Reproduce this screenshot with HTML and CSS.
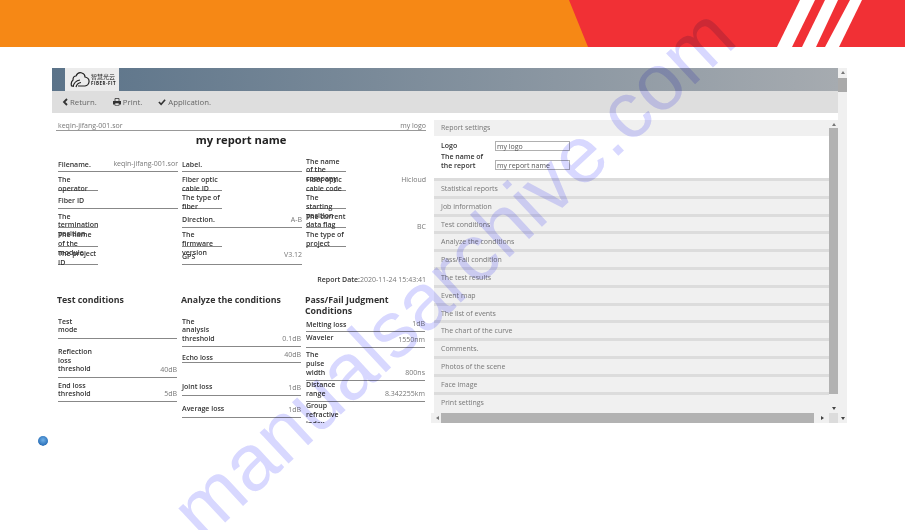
FILE: index.html
```html
<!DOCTYPE html>
<html lang="en">
<head>
    <meta charset="UTF-8">
    <meta name="viewport" content="width=device-width, initial-scale=1.0">
    <title>Report settings</title>
    <link rel="stylesheet" href="styles.css">
</head>
<body>

    <div class="banner">
        <svg width="905" height="47" viewBox="0 0 905 47">
            <rect width="905" height="47" fill="#f68815"/>
            <polygon points="569,0 905,0 905,47 588,47" fill="#f13035"/>
            <polygon points="800,0 815,0 792,47 777,47" fill="#fff"/>
            <polygon points="825,0 838,0 816,47 802,47" fill="#fff"/>
            <polygon points="850,0 862,0 839,47 825,47" fill="#fff"/>
        </svg>
    </div>

    <div class="app">
        <div class="app-main">
            <div class="titlebar">
                <div class="logo">
                    <svg width="20" height="17" viewBox="0 0 20 17">
                        <path d="M4 15 H1.500 Q0.500 11 3 9 Q3 5 6 5 Q8 0.500 12 2 Q15 3 15 6 Q19.500 7 19 11 Q18.500 14.500 15 15 H8" fill="none" stroke="#222" stroke-width="1.200"/>
                        <path d="M3 16 Q4 10 10 9 M6 16 Q7 12 11 11.500" fill="none" stroke="#222" stroke-width="1.200"/>
                    </svg>
                    <div class="logo-text">
                        <span class="logo-cn">智慧光云</span>
                        <span class="logo-en">FIBER-FIT</span>
                    </div>
                </div>
            </div>
            <div class="toolbar">
                <span class="tool">
                    <svg width="6" height="8" viewBox="0 0 6 8"><path d="M5 1 L2 4 L5 7" fill="none" stroke="#333" stroke-width="1.800"/></svg>
                    Return.
                </span>
                <span class="tool">
                    <svg width="8" height="8" viewBox="0 0 8 8"><path d="M2 3 V0.500 H6 V3" fill="none" stroke="#333" stroke-width="0.800"/><rect x="0" y="3" width="8" height="3.500" fill="#333"/><rect x="2" y="5" width="4" height="2.500" fill="#dedede" stroke="#333" stroke-width="0.600"/></svg>
                    Print.
                </span>
                <span class="tool">
                    <svg width="8" height="8" viewBox="0 0 9 8"><path d="M1 4 L3.500 6.500 L8 1.500" fill="none" stroke="#333" stroke-width="1.800"/></svg>
                    Application.
                </span>
            </div>
            <div class="content">
                <div class="report">
                    <div class="report-head"><span>keqin-jifang-001.sor</span><span>my logo</span></div>
                    <h1 class="report-title">my report name</h1>

                    <div class="info-grid">
                        <div class="col">
                            <div class="row h18 full"><b class="one">Filename.</b><i class="nowrap">keqin-jifang-001.sor</i></div>
                            <div class="row h19"><b class="narrow">The operator</b></div>
                            <div class="row h18 full"><b class="one">Fiber ID</b></div>
                            <div class="row h19"><b class="narrow">The termination position</b></div>
                            <div class="row h19"><b class="narrow">The name of the module</b></div>
                            <div class="row h18"><b class="narrow">The project ID</b></div>
                        </div>
                        <div class="col">
                            <div class="row h18 full"><b class="one">Label.</b></div>
                            <div class="row h19"><b class="narrow">Fiber optic cable ID</b></div>
                            <div class="row h18"><b class="narrow">The type of fiber</b></div>
                            <div class="row h19 full"><b class="one">Direction.</b><i>A-B</i></div>
                            <div class="row h19"><b class="narrow">The firmware version</b></div>
                            <div class="row h18 full"><b class="one">GPS</b><i class="top">V3.12</i></div>
                        </div>
                        <div class="col">
                            <div class="row h18"><b class="narrow">The name of the company</b></div>
                            <div class="row h19"><b class="narrow">Fiber optic cable code</b><i class="top">Hicloud</i></div>
                            <div class="row h18"><b class="narrow">The starting position</b></div>
                            <div class="row h19"><b class="narrow">The current data flag</b><i class="drop">BC</i></div>
                            <div class="row h19"><b class="narrow">The type of project</b></div>
                        </div>
                    </div>

                    <div class="report-date"><b>Report Date:</b>2020-11-24 15:43:41</div>

                    <div class="cond-grid">
                        <div class="cond">
                            <h2>Test conditions</h2>
                            <div class="cond-rows">
                                <div class="row h22 full"><b class="wide tight">Test mode</b></div>
                                <div class="row h39 full"><b class="wide tall">Reflection loss threshold</b><i>40dB</i></div>
                                <div class="row h24 full"><b class="wide">End loss threshold</b><i>5dB</i></div>
                            </div>
                        </div>
                        <div class="cond">
                            <h2>Analyze the conditions</h2>
                            <div class="cond-rows">
                                <div class="row h30 full"><b class="wide tight">The analysis threshold</b><i>0.1dB</i></div>
                                <div class="row h16 full"><b class="one">Echo loss</b><i class="top">40dB</i></div>
                                <div class="row h33 full"><b class="low">Joint loss</b><i>1dB</i></div>
                                <div class="row h22 full"><b class="low">Average loss</b><i>1dB</i></div>
                            </div>
                        </div>
                        <div class="cond">
                            <h2>Pass/Fail Judgment Conditions</h2>
                            <div class="cond-rows shift">
                                <div class="row h13 full"><b class="flat">Melting loss</b><i>1dB</i></div>
                                <div class="row h15 full"><b class="flat">Waveler</b><i>1550nm</i></div>
                                <div class="row h33 full"><b class="wide">The pulse width</b><i>800ns</i></div>
                                <div class="row h21 full"><b class="wide tight">Distance range</b><i>8.342255km</i></div>
                                <div class="row h21"><b class="wide tight">Group refractive index</b></div>
                            </div>
                        </div>
                    </div>
                </div>

                <div class="side">
                    <div class="panel">
                        <div class="acc-head first">Report settings</div>
                        <div class="acc-body">
                            <div class="form-row"><b>Logo</b><span class="field">my logo</span></div>
                            <div class="form-row"><b>The name of the report</b><span class="field">my report name</span></div>
                        </div>
                        <div class="acc-head">Statistical reports</div>
                        <div class="acc-head">Job information</div>
                        <div class="acc-head">Test conditions</div>
                        <div class="acc-head">Analyze the conditions</div>
                        <div class="acc-head">Pass/Fail condition</div>
                        <div class="acc-head">The test results</div>
                        <div class="acc-head">Event map</div>
                        <div class="acc-head">The list of events</div>
                        <div class="acc-head">The chart of the curve</div>
                        <div class="acc-head">Comments.</div>
                        <div class="acc-head">Photos of the scene</div>
                        <div class="acc-head">Face image</div>
                        <div class="acc-head">Print settings</div>
                    </div>
                    <div class="vbar">
                        <span class="arrow up"></span>
                        <span class="vthumb"></span>
                        <span class="arrow down"></span>
                    </div>
                    <div class="hbar">
                        <span class="arrow left"></span>
                        <span class="hthumb"></span>
                        <span class="arrow right"></span>
                    </div>
                    <div class="corner"></div>
                </div>
            </div>
        </div>
        <div class="outer-bar">
            <span class="arrow up"></span>
            <span class="outer-thumb"></span>
            <span class="arrow down"></span>
        </div>
    </div>

    <div class="status"><span class="globe"></span></div>

    <div class="watermark-layer">
        <div class="watermark">manualsarchive.com</div>
    </div>

</body>
</html>
```

FILE: styles.css
```css
html, body { margin: 0; height: 530px; overflow: hidden; }
body { position: relative; background-color: #fff; font-family: "Open Sans", "Noto Sans", sans-serif; font-size: 7px; color: #777; }
.banner { height: 47px; }
.banner svg { display: block; }

.app { display: flex; width: 795px; height: 355px; margin: 21px 0 0 52px; }
.app-main { width: 786px; display: flex; flex-direction: column; }

.titlebar { height: 23px; flex: none; padding-left: 13px; background: linear-gradient(to right, #5b7389, #a6abb0); }
.logo { width: 54px; height: 23px; display: flex; align-items: center; gap: 1px; padding-left: 5px; box-sizing: border-box; background-color: #ececec; }
.logo-text { display: flex; flex-direction: column; color: #222; line-height: 7px; }
.logo-cn { font-family: "Noto Sans CJK SC", sans-serif; font-size: 6px; }
.logo-en { font-size: 4.500px; font-weight: 700; letter-spacing: 0.500px; }

.toolbar { height: 22px; flex: none; display: flex; align-items: center; gap: 16px; padding: 0 0 1px 10px; box-sizing: border-box; background-color: #dedede; font-size: 7.800px; color: #666; }
.tool { display: flex; align-items: center; gap: 2px; }

.content { flex: 1; min-height: 0; display: flex; }
.report { width: 382px; flex: none; overflow: hidden; padding: 8px 0 0 4px; box-sizing: border-box; }
.report-head { display: flex; justify-content: space-between; width: 370px; height: 10px; line-height: 10px; padding: 0 0 0 2px; box-sizing: border-box; border-bottom: 1px solid #999; }
.report-title { margin: 1px 0 0; width: 370px; text-align: center; font-size: 11.200px; line-height: 15px; font-weight: 700; color: #222; }

.info-grid { display: flex; gap: 4px; margin: 7px 0 0 2px; height: 111px; }
.col { width: 120px; display: flex; flex-direction: column; }
.row { display: flex; justify-content: space-between; box-sizing: border-box; flex: none; }
.row b { color: #333; font-weight: 600; line-height: 8.700px; display: block; height: 100%; box-sizing: border-box; padding-top: 3.500px; }
.row i { font-style: normal; align-self: flex-end; line-height: 9px; padding-bottom: 3px; margin-left: auto; }
.row i.top { align-self: flex-start; padding: 3px 0 0; }
.row i.drop { padding-bottom: 0; margin-bottom: -3px; }
.row i.nowrap { white-space: nowrap; }
.row b.narrow { width: 40px; flex: none; border-bottom: 1px solid #888; }
.row b.wide { width: 28px; flex: none; }
.row b.one { padding-top: 6.500px; }
.row b.low { align-self: flex-end; height: auto; padding-bottom: 3px; white-space: nowrap; }
.row b.flat { padding-top: 1.500px; white-space: nowrap; }
.row b.tight { padding-top: 0.500px; }
.row b.tall { padding-top: 9px; }
.full { border-bottom: 1px solid #888; }
.h13 { height: 13px; }
.h15 { height: 15.600px; }
.h16 { height: 16px; }
.h18 { height: 18.300px; }
.h19 { height: 18.700px; }
.h21 { height: 21px; }
.h22 { height: 22px; }
.h24 { height: 24px; }
.h30 { height: 30px; }
.h33 { height: 33px; }
.h39 { height: 39px; }

.report-date { width: 370px; margin-top: 10px; text-align: right; line-height: 9px; }
.report-date b { color: #333; font-weight: 600; }

.cond-grid { display: flex; gap: 4px; margin-top: 11px; padding-left: 1px; }
.cond { width: 120px; flex: none; }
.cond h2 { margin: 0; font-size: 8.800px; line-height: 11px; font-weight: 700; color: #333; }
.cond:last-child h2 { width: 110px; }
.cond-rows { margin: 11px 0 0 1px; }
.cond-rows.shift { margin-top: 2px; }

.side { width: 404px; display: grid; grid-template-columns: 395px 9px; grid-template-rows: 293px 10px; padding-top: 7px; box-sizing: border-box; }
.panel { overflow: hidden; background-color: #f0f0f0; }
.acc-head { height: 15px; line-height: 15px; padding-left: 7px; margin-top: 2.800px; background-color: #f0f0f0; box-shadow: 0 -3px 0 #dcdcdc; }
.acc-head.first { height: 16px; line-height: 16px; margin-top: 0; box-shadow: none; }
.acc-body { height: 42px; padding: 5px 0 0 7px; box-sizing: border-box; background-color: #fff; margin-bottom: 3px; }
.form-row { display: flex; align-items: flex-end; }
.form-row b { width: 54px; color: #333; font-weight: 600; line-height: 8.700px; }
.form-row + .form-row { margin-top: 2px; }
.field { width: 75px; height: 10px; line-height: 9px; padding-left: 1px; box-sizing: border-box; border: 1px solid #b0b0b0; color: #555; }

.arrow { width: 0; height: 0; flex: none; margin: 3px 0; border: 2.500px solid transparent; }
.arrow.up { border-top-width: 0; border-bottom: 3px solid #777; }
.arrow.down { border-bottom-width: 0; border-top: 3px solid #444; }
.arrow.left { margin: 0 2px; border-left-width: 0; border-right: 3px solid #777; }
.arrow.right { margin: 0 2px 0 auto; border-right-width: 0; border-left: 3px solid #444; }

.vbar { display: flex; flex-direction: column; align-items: center; background-color: #f0f0f0; }
.vthumb { width: 9px; height: 266px; margin-top: -1px; background-color: #b2b2b2; }
.vbar .down { margin-top: auto; }
.hbar { display: flex; align-items: center; margin-left: -3px; padding: 0 3px; background-color: #f0f0f0; }
.hthumb { width: 373px; height: 10px; background-color: #b2b2b2; }
.corner { background-color: #dcdcdc; }

.outer-bar { width: 9px; display: flex; flex-direction: column; align-items: center; background-color: #f0f0f0; }
.outer-thumb { width: 9px; height: 14px; margin: 1px 0 auto; background-color: #aaa; }

.status { padding: 13px 0 0 38px; }
.globe { display: block; width: 10px; height: 10px; border-radius: 50%; background: radial-gradient(circle at 50% 40%, #6fb0e8, #2a6fb8 70%, #cfd8e6 75%); }

.watermark-layer { position: absolute; top: 0; left: 0; width: 905px; height: 530px; overflow: hidden; mix-blend-mode: multiply; pointer-events: none; }
.watermark { width: 760px; margin: 223px 0 0 73px; text-align: center; font-family: "Liberation Sans", sans-serif; font-size: 80px; line-height: 100px; color: #d8d8ff; transform: rotate(-43deg); white-space: nowrap; }
```
